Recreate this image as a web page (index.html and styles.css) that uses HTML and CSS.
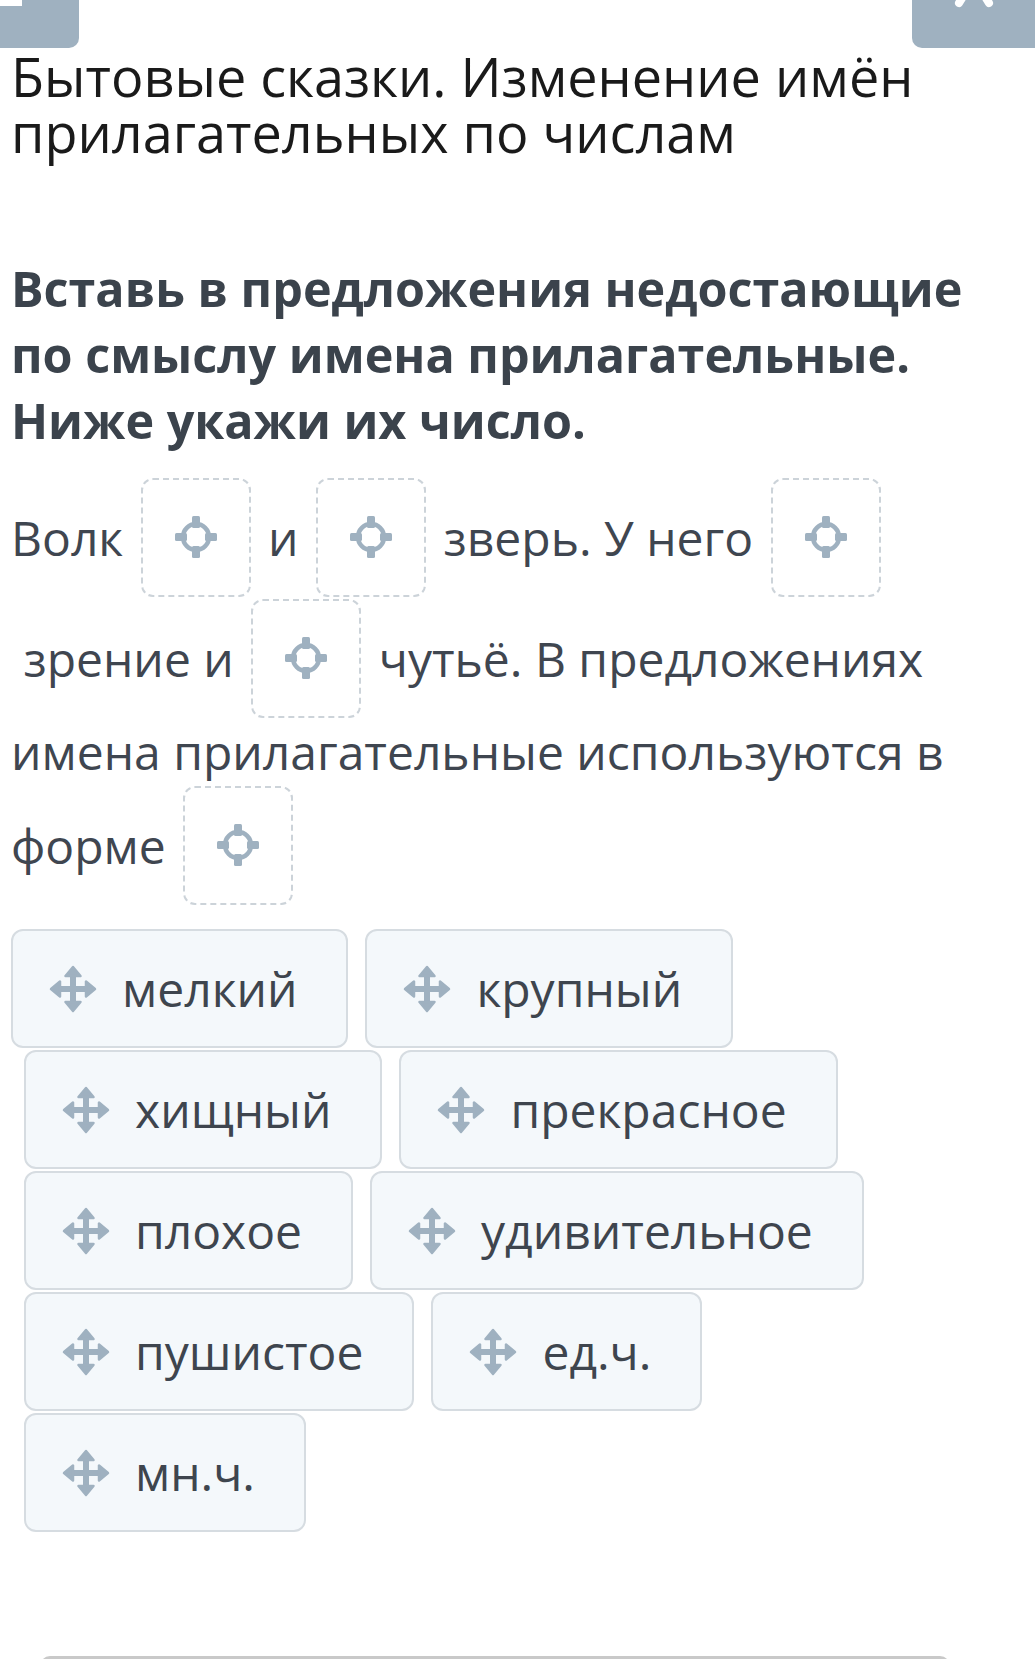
FILE: index.html
```html
<!DOCTYPE html>
<html lang="ru">
<head>
    <meta charset="UTF-8">
    <meta name="viewport" content="width=device-width, initial-scale=1.0">
    <title>Бытовые сказки</title>
    <link rel="stylesheet" href="styles.css">
</head>
<body>

<!-- Верхние кнопки -->
<header class="topbar">
    <div class="corner-btn corner-left"><span class="corner-mark"></span></div>
    <div class="corner-btn corner-right">
        <svg class="close-icon" width="50" height="12" viewBox="0 0 50 12">
            <path d="M22 -16 L10 3 M28 -16 L40 3" stroke="#fff" stroke-width="8" stroke-linecap="round" fill="none"/>
        </svg>
    </div>
</header>

<main class="task">
    <h1 class="title">Бытовые сказки. Изменение имён прилагательных по числам</h1>

    <h2 class="prompt">Вставь в предложения недостающие по смыслу имена прилагательные. Ниже укажи их число.</h2>

    <!-- Текст с пропусками -->
    <p class="sentence">
        Волк <span class="drop"><svg class="target" viewBox="0 0 42 42"><use href="#target"/></svg></span>
        и <span class="drop"><svg class="target" viewBox="0 0 42 42"><use href="#target"/></svg></span>
        зверь. У него <span class="drop"><svg class="target" viewBox="0 0 42 42"><use href="#target"/></svg></span><br>
        &nbsp;зрение и <span class="drop"><svg class="target" viewBox="0 0 42 42"><use href="#target"/></svg></span>
        чутьё. В предложениях имена прилагательные используются в
        форме <span class="drop"><svg class="target" viewBox="0 0 42 42"><use href="#target"/></svg></span>
    </p>

    <!-- Варианты ответов -->
    <div class="bank">
        <div class="bank-row first-row">
            <div class="chip"><svg class="move" viewBox="0 0 48 48"><use href="#move"/></svg>мелкий</div>
            <div class="chip"><svg class="move" viewBox="0 0 48 48"><use href="#move"/></svg>крупный</div>
        </div>
        <div class="bank-row">
            <div class="chip"><svg class="move" viewBox="0 0 48 48"><use href="#move"/></svg>хищный</div>
            <div class="chip"><svg class="move" viewBox="0 0 48 48"><use href="#move"/></svg>прекрасное</div>
        </div>
        <div class="bank-row">
            <div class="chip"><svg class="move" viewBox="0 0 48 48"><use href="#move"/></svg>плохое</div>
            <div class="chip"><svg class="move" viewBox="0 0 48 48"><use href="#move"/></svg>удивительное</div>
        </div>
        <div class="bank-row">
            <div class="chip"><svg class="move" viewBox="0 0 48 48"><use href="#move"/></svg>пушистое</div>
            <div class="chip"><svg class="move" viewBox="0 0 48 48"><use href="#move"/></svg>ед.ч.</div>
        </div>
        <div class="bank-row">
            <div class="chip"><svg class="move" viewBox="0 0 48 48"><use href="#move"/></svg>мн.ч.</div>
        </div>
    </div>
</main>

<div class="footer-bar"></div>

<!-- Иконки -->
<svg class="defs" width="0" height="0">
    <defs>
        <g id="target" fill="#9fb1c0">
            <circle cx="21" cy="21" r="13" fill="none" stroke="#9fb1c0" stroke-width="4.5"/>
            <rect x="17" y="0" width="8" height="12" rx="1.5"/>
            <rect x="17" y="30" width="8" height="12" rx="1.5"/>
            <rect x="0" y="17" width="12" height="8" rx="1.5"/>
            <rect x="30" y="17" width="12" height="8" rx="1.5"/>
        </g>
        <g id="move" fill="#9fb1c0" stroke="#9fb1c0" stroke-linejoin="round" stroke-width="2.5">
            <rect x="21" y="9" width="6" height="30" stroke="none"/>
            <rect x="9" y="21" width="30" height="6" stroke="none"/>
            <polygon points="24,2 31.5,11 16.5,11"/>
            <polygon points="24,46 31.5,37 16.5,37"/>
            <polygon points="2,24 11,16.5 11,31.5"/>
            <polygon points="46,24 37,16.5 37,31.5"/>
        </g>
    </defs>
</svg>

</body>
</html>
```

FILE: styles.css
```css
/* Базовые настройки */
body {
    margin: 0;
    background-color: #fff;
    font-family: "Open Sans", "Noto Sans", sans-serif;
    color: #3e454e;
    overflow: hidden;
}

.topbar {
    display: flex;
    justify-content: space-between;
    height: 48px;
}

.corner-btn {
    background-color: #9fb1c0;
    height: 48px;
}

.corner-left {
    width: 79px;
    border-radius: 0 0 10px 0;
}

.corner-mark {
    display: block;
    width: 22px;
    height: 6px;
    background-color: #fff;
}

.corner-right {
    width: 123px;
    border-radius: 0 0 0 10px;
    display: flex;
    justify-content: center;
}

.close-icon {
    display: block;
}

.task {
    padding: 0 20px 0 11px;
}

.title {
    margin: 0;
    font-size: 54px;
    font-weight: 400;
    line-height: 56px;
    color: #1a1a1a;
}

.prompt {
    margin: 95px 0 0;
    font-size: 48.5px;
    font-weight: 700;
    line-height: 66px;
    color: #3b434c;
}

.sentence {
    margin: 24px 0 0;
    font-size: 48px;
    line-height: 66px;
    color: #3f4650;
}

.drop {
    display: inline-block;
    vertical-align: -42px;
    width: 110px;
    height: 119px;
    margin: 1px 5px;
    box-sizing: border-box;
    border: 2px dashed #ccd3d9;
    border-radius: 12px;
}

.drop .target {
    display: block;
    width: 42px;
    height: 42px;
    margin: 36px auto 0;
}

.bank {
    margin-top: 23px;
    display: flex;
    flex-direction: column;
    gap: 2px;
}

.bank-row {
    display: flex;
    gap: 17px;
    padding-left: 13px;
}

.bank-row.first-row {
    padding-left: 0;
}

.chip {
    display: flex;
    align-items: center;
    height: 119px;
    box-sizing: border-box;
    padding: 0 49px 0 36px;
    background-color: #f4f8fb;
    border: 2px solid #d6dce1;
    border-radius: 12px;
    font-size: 48px;
    color: #3e454e;
}

.chip .move {
    width: 48px;
    height: 48px;
    margin-right: 25px;
    flex-shrink: 0;
}

.footer-bar {
    margin: 124px 85px 0 40px;
    height: 20px;
    background-color: #c9c9c9;
    border-radius: 10px 10px 0 0;
}

.defs {
    position: absolute;
}
```
